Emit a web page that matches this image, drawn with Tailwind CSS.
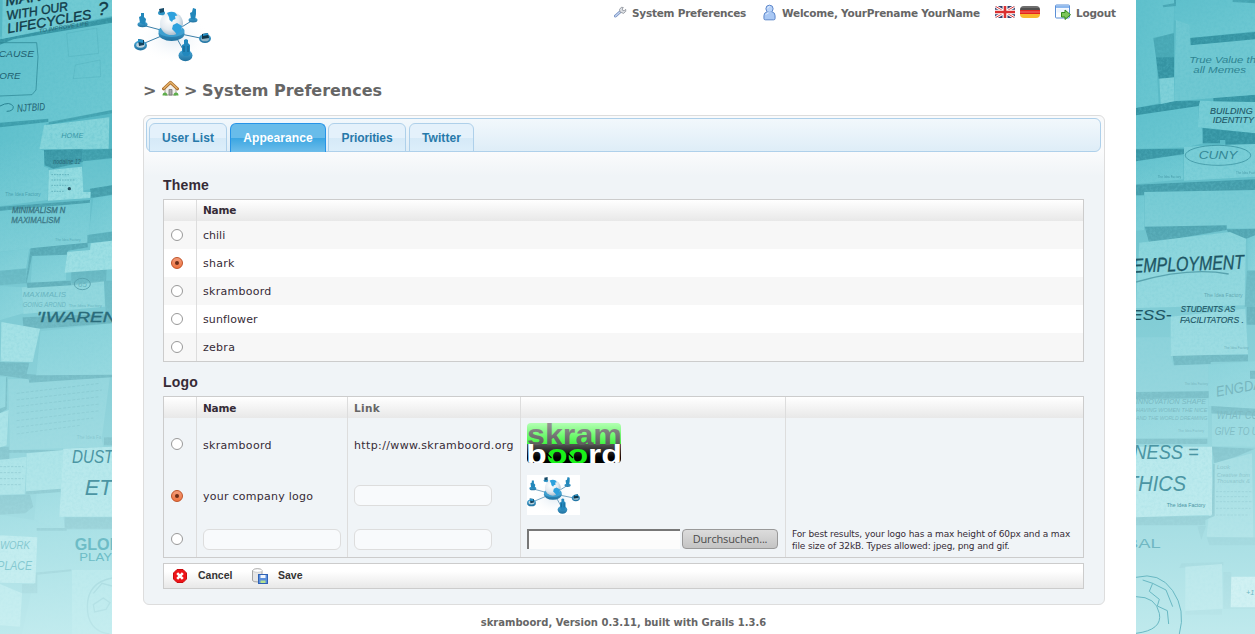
<!DOCTYPE html>
<html lang="en">
<head>
<meta charset="utf-8">
<title>skramboord - System Preferences</title>
<script src="https://cdn.jsdelivr.net/npm/@tailwindcss/browser@4"></script>
</head>
<body class="flex h-[634px] w-[1255px] overflow-hidden bg-white font-['DejaVu_Sans',sans-serif] text-[11px] text-[#362b36]">

<!-- shared symbols -->
<svg class="absolute size-0">
  <defs>
    <radialGradient id="globe" cx=".4" cy=".35" r=".7"><stop offset="0" stop-color="#fff"/><stop offset=".6" stop-color="#e3eaf0"/><stop offset="1" stop-color="#9fb6c8"/></radialGradient>
    <linearGradient id="disc" x1="0" y1="0" x2="0" y2="1"><stop offset="0" stop-color="#49abdb"/><stop offset="1" stop-color="#20719f"/></linearGradient>
    <radialGradient id="halo"><stop offset="0" stop-color="#c8dbea"/><stop offset="1" stop-color="#fff" stop-opacity="0"/></radialGradient>
    <filter id="grain" x="0" y="0" width="1" height="1"><feTurbulence type="fractalNoise" baseFrequency=".12" numOctaves="3" seed="4"/><feColorMatrix values="0 0 0 0 .1  0 0 0 0 .5  0 0 0 0 .58  1.4 0 0 0 -.5"/></filter>
  </defs>
  <symbol id="network" viewBox="0 0 77 55">
    <ellipse cx="40" cy="31" rx="37" ry="24" fill="url(#halo)" opacity=".5"/>
    <path d="M8 17 38 25 59 12M28 5l7 14M6 37l31-13 34 7M41 27l10 18" fill="none" stroke="#3c7fa8" stroke-width="1"/>
    <ellipse cx="37.500" cy="25.500" rx="13" ry="7.500" fill="url(#disc)"/>
    <ellipse cx="37.500" cy="23" rx="13" ry="6" fill="#3fa0d0"/>
    <circle cx="37.500" cy="15.500" r="11.500" fill="url(#globe)"/>
    <path d="M33 5q4-2 8-.5l2.500 3-2.500.5.500 3-2.500 1-1 2-2.500-2-.5-3zM39 17l4-2 5 3-1 5-4 4-2-3-3-3z" fill="#2ea1dd"/>
    <ellipse cx="8.500" cy="16.500" rx="5" ry="2.800" fill="url(#disc)"/>
    <path d="M6 15 5 9l2-1V5h3v4l2 2-1 6z" fill="#2388bb"/>
    <ellipse cx="27.500" cy="5" rx="3.500" ry="2.200" fill="#2e94c6"/><path d="m25 1 5-1v4l-4 1z" fill="#174b68"/>
    <ellipse cx="59" cy="12" rx="4.500" ry="2.500" fill="url(#disc)"/>
    <path d="m57 11-1-6 2-1 1-4 3 1v5l-1 6z" fill="#2388bb"/>
    <ellipse cx="6.500" cy="37.500" rx="6.500" ry="5" fill="url(#disc)"/>
    <ellipse cx="6.500" cy="37" rx="4.300" ry="2.800" fill="#bdd3de"/><path d="m4 31 6 1v5l-5 1z" fill="#12425d"/><path d="m4 31 5 1v3l-5-1z" fill="#2591c8"/>
    <ellipse cx="71" cy="30.500" rx="6" ry="4.500" fill="url(#disc)"/>
    <ellipse cx="71" cy="31" rx="4" ry="2.300" fill="#8fb4c6"/><path d="m68 26 6-1 1 5-7 1z" fill="#0f3548"/><path d="m69 26 5-1v2l-5 1z" fill="#2591c8"/>
    <ellipse cx="51.500" cy="47.500" rx="7" ry="5.800" fill="url(#disc)"/>
    <path d="m48 45 0-8 2-1v-4l2-1 2 1v3l2 2v9l-2 2-4 0z" fill="#2288bd"/><path d="M50 38v6m4-6v6" stroke="#155f89"/>
  </symbol>
</svg>

<!-- left wall of sticky notes -->
<svg class="h-[634px] w-[112px] shrink-0" viewBox="0 0 336 1902" font-family="Liberation Sans" font-style="italic">
  <defs>
    <linearGradient id="fade" x1="0" y1="0" x2="0" y2="1"><stop offset=".22" stop-color="#c4ecef" stop-opacity="0"/><stop offset=".45" stop-color="#c4ecef" stop-opacity=".32"/><stop offset=".75" stop-color="#c4ecef" stop-opacity=".62"/><stop offset="1" stop-color="#cdf0f2" stop-opacity=".88"/></linearGradient>
    <linearGradient id="note" x1="0" y1="0" x2="1" y2="1"><stop offset="0" stop-color="#5fc0cc"/><stop offset="1" stop-color="#6fc9d3"/></linearGradient>
  </defs>
  <rect width="336" height="1902" fill="#56b7c4"/>
  <g fill="url(#note)">
    <path d="M0 110 336 60V330L145 370 0 375z"/>
    <path d="M0 376 140 360 135 400 118 448 132 452V500L145 504 143 600 0 618z"/>
    <path d="M0 634 272 600 268 700 262 728 0 755z"/>
    <path d="M248 484 336 476V556L246 572z" fill="#63c1cc"/>
    <path d="M280 594 336 586V694L266 704z"/>
    <path d="M0 756 88 745 78 804 0 812z"/>
    <path d="M98 766 200 762 198 840 92 852z"/>
    <path d="M64 862 312 842 315 920 70 942z" fill="#79cdd5"/>
    <path d="M0 858 64 862 70 940 0 960z"/>
    <path d="M122 994 336 970V1126L108 1130z"/>
    <path d="M24 1138 330 1130 305 1318 310 1340 30 1350z" fill="#6cc4cf"/>
    <path d="M0 1130 22 1132 18 1220 0 1224z"/>
    <path d="M110 1480 178 1474 196 1590 100 1590z"/>
    <path d="M0 1544 100 1560 196 1590V1650L0 1610z"/>
    <path d="M112 1590H330V1902H66L100 1750z"/>
  </g>
  <g fill="#3593a2">
    <path d="M0 118 336 52V68L40 118 0 134z"/>
    <path d="M146 366 336 330V340L146 374z" opacity=".6"/>
    <path d="M0 368 145 356V366L0 382z" opacity=".8"/>
    <path d="M132 450 248 448V486L160 506 134 496z"/>
    <path d="M248 450 336 446V474L248 484z" opacity=".8"/>
    <path d="M270 566 336 556V584L274 594z"/>
    <path d="M0 620 270 600V608L0 632z"/>
    <path d="M262 705 336 695V722L262 730z" opacity=".7"/>
    <path d="M92 745 262 728 264 742 204 752 200 764 96 768 80 850 76 850z"/>
    <path d="M80 848 212 842 214 856 82 864z"/>
    <path d="M0 812 80 806 76 850 0 856z" opacity=".55"/>
    <path d="M214 812 320 806 318 844 214 856z" opacity=".6"/>
    <path d="M312 842H336V950H318z" opacity=".5"/>
    <path d="M68 952 330 942 336 970 70 990z"/>
    <path d="M120 992 108 1124 80 1122 88 1088 0 1086V1126L86 1138 88 1148 336 1132V1124L108 1126z"/>
    <path d="M22 1132 20 1228 0 1240V1226L16 1220 18 1132z"/>
    <path d="M0 1342 26 1340V1350H190V1358H28V1378H0z"/>
    <path d="M78 1474 182 1464V1476L76 1484z"/>
    <path d="M0 1486 90 1484 100 1520 76 1540 0 1544z"/>
    <path d="M194 1552H336V1586H194zM110 1584H200V1592H110zM100 1718 214 1708V1714L112 1724V1780H66V1752H102z"/>
    <path d="M312 1312H336V1336H312z"/>
  </g>
  <g fill="#90dbe0">
    <path d="M8 0H336V48L6 116z" fill="#71cad3"/>
    <path d="M132 376 328 352 326 446 118 448z" fill="#86d5db"/>
    <path d="M146 510 246 500 250 576 272 576 270 594 144 602z"/>
    <path d="M272 730 336 722V808L194 818 202 756 270 750z"/>
    <path d="M4 966 120 986 98 1086 2 1084z"/>
    <path d="M0 1380 80 1370 74 1482 0 1484z"/><path d="M80 1360 190 1350 184 1466 78 1474z"/>
    <path d="M190 1346 336 1340V1550H178z" fill="#a6e4e8"/>
    <path d="M0 1240 26 1230 20 1336 0 1342z"/>
    <path d="M0 1606 112 1612 106 1750 0 1748z" fill="#b8ecee"/>
    <path d="M0 1752 66 1780 60 1880 0 1876z" fill="#a9e6e9"/>
    <path d="M216 1710H336V1902H216z"/>
  </g>
  <rect width="336" height="1902" filter="url(#grain)" opacity=".5"/>
  <g fill="none" stroke="#2b8493" stroke-width="3">
    <path d="M0 128 110 128 114 170 108 270 96 284 0 288" opacity=".7"/>
    <path d="M200 100 290 84 296 160 206 170zM226 195 300 180 302 230 220 236z" opacity=".15"/>
    <ellipse cx="247" cy="852" rx="24" ry="17"/>
    <path d="M0 318q30-16 40 2 0 14-20 14"/>
    <path d="M154 524H210M154 540H225M154 556H205M154 574H194" stroke-dasharray="5 3" opacity=".5"/>
    <path d="M0 1400H70M0 1418H66M0 1436H70M0 1454H62" stroke-dasharray="7 4" opacity=".6"/>
    <path d="M50 1180 300 1150M50 1200 306 1170M50 1220 300 1190M50 1240 300 1212M50 1262 300 1232M50 1282 280 1254M50 1302 240 1276" stroke-dasharray="9 5" opacity=".35"/>
    <path d="M336 1734q-74 14-74 86t66 82M280 1780l26-30 30 8m-56 56 30-20 20 14-12 20-34 8z" stroke-width="4" stroke="#439eab"/>
  </g>
  <circle cx="208" cy="566" r="5" fill="#153e4d"/>
  <g fill="#123b49" stroke="#123b49" stroke-width="1.200">
    <text transform="translate(18 18) rotate(-9)" font-size="46" textLength="110">MAN</text>
    <text transform="translate(22 60) rotate(-9)" font-size="38" textLength="186">WITH OUR</text>
    <text transform="translate(24 100) rotate(-10)" font-size="40" textLength="256">LIFECYCLES</text>
    <text transform="translate(294 44)" font-size="54">?</text>
  </g>
  <g fill="#205f6f">
    <text x="118" y="98" font-size="16" textLength="150" transform="rotate(-9 118 98)">TO IMPROVE LIFE</text>
    <text x="-4" y="172" font-size="26" textLength="106">CAUSE</text>
    <text x="-2" y="238" font-size="28" textLength="64">ORE</text>
    <text x="52" y="336" font-size="32" textLength="84" transform="rotate(-4 52 336)">NJTBID</text>
    <text x="36" y="638" font-size="25" textLength="160" stroke="#205f6f">MINIMALISM N</text>
    <text x="34" y="668" font-size="29" textLength="146" stroke="#205f6f">MAXIMALISM</text>
    <text x="160" y="492" font-size="20" textLength="82">nodaline 12</text>
  </g>
  <g fill="#3a98a7">
    <text x="184" y="414" font-size="20" textLength="66">HOME</text>
    <text x="16" y="588" font-size="15" font-style="normal" textLength="106">The Idea Factory</text>
    <text x="166" y="722" font-size="13" font-style="normal" textLength="76">The Idea Factory</text>
    <text x="234" y="860" font-size="24">65</text>
    <text x="68" y="892" font-size="22" textLength="130">MAXIMALIS</text>
    <text x="68" y="920" font-size="22" textLength="130">GOING AROND</text>
    <text x="206" y="922" font-size="13" font-style="normal" textLength="100">The Idea Factory</text>
    <text x="230" y="1316" font-size="14" font-style="normal" textLength="74">The Idea Fa</text>
  </g>
  <rect width="336" height="1902" fill="url(#fade)"/>
  <text x="110" y="966" font-size="44" textLength="240" fill="#2a6b7a" stroke="#2a6b7a">'IWAREN</text>
  <g fill="#4f9fad">
    <text x="216" y="1388" font-size="56" textLength="124" fill="#4b95a3">DUST</text>
    <text x="254" y="1486" font-size="64" textLength="84" fill="#4b95a3">ET</text>
    <text x="224" y="1650" font-size="50" font-style="normal" font-weight="bold" textLength="140" fill="#6dbcc6">GLOB</text>
    <text x="238" y="1684" font-size="34" font-style="normal" textLength="98" fill="#6dbcc6">PLAY</text>
    <text x="0" y="1646" font-size="34" textLength="90" fill="#85c9d1">WORK</text>
    <text x="-8" y="1710" font-size="36" textLength="104" fill="#85c9d1">PLACE</text>
  </g>
</svg>

<!-- page -->
<div class="flex h-[634px] w-[1024px] shrink-0 flex-col bg-white pl-[31px] pr-[31px]">
  <header class="flex h-[74px] justify-between">
    <svg class="-ml-[9px] mt-2 h-[55px] w-[77px]"><use href="#network"/></svg>
    <nav class="mr-[-21px] flex h-[27px] items-center pt-px text-[10.5px] font-bold text-[#666]">
      <svg class="mr-[4px] mb-1 size-[14px]" viewBox="0 0 14 14"><path d="M1.500 11 6 7" stroke="#7591c4" stroke-width="3" stroke-linecap="round"/><path d="M1.500 11 6 7" stroke="#c8d6ef" stroke-width="1.200" stroke-linecap="round"/><path d="m6 7-.5-2.500L7.300 2.300l2 .2L8.300 4l.4 1.400 1.500.3 1.500-1.400.1 2-2.200 2.100z" fill="#dcdfe4" stroke="#8a8f98" stroke-width=".8"/></svg>
      <span class="w-[131px] whitespace-nowrap tracking-[-0.24px]">System Preferences</span>
      <svg class="mb-[3px] mr-[6px] h-[17px] w-[13px]" viewBox="0 0 14 17"><path d="M1 15V12Q1 8.500 4 8H10Q13 8.500 13 12V15Q13 16.400 11.500 16.400H2.500Q1 16.400 1 15z" fill="#a9c8f4" stroke="#5480c6"/><circle cx="7" cy="4.500" r="3.900" fill="#b9d3f8" stroke="#5480c6"/><path d="M4.500 8.200h5" stroke="#b0cdf6" stroke-width="1.500"/><path d="M3 11q1-2 3-2M5 4q0-1.500 2-2" stroke="#e8f2ff" fill="none"/></svg>
      <span class="w-[213px] whitespace-nowrap tracking-[-0.22px]">Welcome, YourPrename YourName</span>
      <svg class="mb-[5px] mr-[5px] h-[12px] w-[20px]" viewBox="0 0 20 13" preserveAspectRatio="none"><defs><clipPath id="flag"><rect width="20" height="13" rx="2.500"/></clipPath></defs><g clip-path="url(#flag)"><path fill="#34406f" d="M0 0h20v13H0z"/><path d="m0 0 20 13M20 0 0 13" stroke="#fff" stroke-width="3"/><path d="m0 0 20 13M20 0 0 13" stroke="#d33" stroke-width="1"/><path d="M10 0v13M0 6.500h20" stroke="#fff" stroke-width="5"/><path d="M10 0v13M0 6.500h20" stroke="#d93030" stroke-width="2.600"/></g></svg>
      <svg class="mb-[5px] mr-[15px] h-[12px] w-[20px]" viewBox="0 0 20 12"><defs><clipPath id="pill"><rect width="20" height="12" rx="4"/></clipPath></defs><g clip-path="url(#pill)"><path fill="#505050" d="M0 0h20v4H0z"/><path fill="#e6251c" d="M0 4h20v4H0z"/><path fill="#f9b92d" d="M0 8h20v4H0z"/><path fill="#fff" opacity=".18" d="M0 0h20v2H0zM0 5h20v2H0z"/></g></svg>
      <svg class="mb-[4px] mr-[5px] h-[16px] w-[16px]" viewBox="0 0 16 16"><rect x=".5" y="1" width="14" height="13" rx="1" fill="#fdfeff" stroke="#5b8fd6"/><path d="M1 1.500h13v2.500H1z" fill="#8db8ee"/><path d="M1.500 4.500h12v4h-12z" fill="#eef5fd"/><path d="M6.500 8.500H10V6l5.500 4.700L10 15.500V13H6.500z" fill="#7cc65b" stroke="#2f8a1c"/></svg>
      <span class="w-[50px] tracking-[-0.24px]">Logout</span>
    </nav>
  </header>

  <h1 class="flex h-[32px] items-center pt-px text-[16px] font-bold text-[#666]">
    <span class="w-[19px]">&gt;</span>
    <svg class="mb-[4px] mr-[5px] size-[17px]" viewBox="0 0 17 17"><path d="M3 8.500 8.500 3.500 14 8.500V15H3z" fill="#f2f0ec" stroke="#9c9890" stroke-width=".9"/><path d="M7 9.500h3V15H7z" fill="#aaa8a6" stroke="#777" stroke-width=".8"/><path d="M1.500 8.800 8.500 2.300 15.500 8.800" fill="none" stroke="#a96d2c" stroke-width="3" stroke-linejoin="round" stroke-linecap="round"/><path d="M1.500 8.800 8.500 2.300 15.500 8.800" fill="none" stroke="#e6b269" stroke-width="1.500" stroke-linejoin="round"/><path d="M.5 15.500q0-3 2.500-3 2 0 2.500 3zM11.500 15.500q0-3 2.500-3 2.500 0 2.500 3z" fill="#5dad4a"/></svg>
    <span class="w-[18px]">&gt;</span>
    <span class="tracking-[-0.03px]">System Preferences</span>
  </h1>

  <main class="mt-[9px] h-[490px] w-[962px] rounded-[6px] border border-[#dddddd] bg-[#f0f4f7] bg-[linear-gradient(to_bottom,#f9fafb_0px,#fafbfc_35px,#f0f4f7_60px)] p-[2px]">
    <div class="flex h-[34px] w-[955px] items-end rounded-[6px] border border-[#aed0ea] bg-[linear-gradient(to_bottom,#f2f8fc,#deedf7)] pl-[2px] font-['Liberation_Sans',sans-serif] text-[12px] font-bold tracking-[0.08px] text-[#2779aa]">
      <div class="-mb-px mr-[3px] flex h-[29px] w-[78px] items-center justify-center rounded-t-[6px] border border-[#aed0ea] bg-[linear-gradient(to_bottom,#e4f1fb_50%,#d5e9f7_50%,#dceefa)] pt-px">User List</div>
      <div class="-mb-px mr-[2px] flex h-[29px] w-[96px] items-center justify-center rounded-t-[6px] border border-b-0 border-[#2694e8] bg-[linear-gradient(to_bottom,#68bcea_50%,#3ba6e2_50%,#6dbdea)] text-white">Appearance</div>
      <div class="-mb-px mr-[3px] flex h-[29px] w-[78px] items-center justify-center rounded-t-[6px] border border-[#aed0ea] bg-[linear-gradient(to_bottom,#e4f1fb_50%,#d5e9f7_50%,#dceefa)] pt-px tracking-[-0.1px]">Priorities</div>
      <div class="-mb-px flex h-[29px] w-[65px] items-center justify-center rounded-t-[6px] border border-[#aed0ea] bg-[linear-gradient(to_bottom,#e4f1fb_50%,#d5e9f7_50%,#dceefa)] pt-px">Twitter</div>
    </div>

    <div class="pl-[17px]">
      <h2 class="mt-[22px] h-[25px] font-['Liberation_Sans',sans-serif] text-[14px] font-bold leading-[22px] tracking-[0.18px]">Theme</h2>
      <div class="grid h-[163px] w-[921px] grid-cols-[33px_1fr] grid-rows-[21px_repeat(5,28px)] border border-[#ccc] tracking-[0.28px]">
        <div class="border-r border-[#ddd] bg-linear-to-b from-white to-[#e8e8e8]"></div>
        <div class="bg-linear-to-b from-white to-[#e8e8e8] pl-[6px] text-[10.5px] font-bold leading-[21px] tracking-[-0.2px]">Name</div>
        <div class="flex items-center border-r border-[#ddd] bg-[#f7f7f7] pl-[7px]"><i class="size-[12px] rounded-full border border-[#999] bg-white"></i></div><div class="bg-[#f7f7f7] pl-[6px] leading-[30px] tracking-normal">chili</div>
        <div class="flex items-center border-r border-[#ddd] bg-white pl-[7px]"><i class="flex size-[12px] items-center justify-center rounded-full border border-[#bf5126] bg-linear-to-b from-[#f39b78] to-[#ee7440]"><b class="size-1 rounded-full bg-[#6c2d18]"></b></i></div><div class="bg-white pl-[6px] leading-[30px]">shark</div>
        <div class="flex items-center border-r border-[#ddd] bg-[#f7f7f7] pl-[7px]"><i class="size-[12px] rounded-full border border-[#999] bg-white"></i></div><div class="bg-[#f7f7f7] pl-[6px] leading-[30px]">skramboord</div>
        <div class="flex items-center border-r border-[#ddd] bg-white pl-[7px]"><i class="size-[12px] rounded-full border border-[#999] bg-white"></i></div><div class="bg-white pl-[6px] leading-[30px] tracking-[0.12px]">sunflower</div>
        <div class="flex items-center border-r border-[#ddd] bg-[#f7f7f7] pl-[7px]"><i class="size-[12px] rounded-full border border-[#999] bg-white"></i></div><div class="h-[28px] bg-[#f7f7f7] pl-[6px] leading-[30px]">zebra</div>
      </div>

      <h2 class="mt-[9px] h-[25px] font-['Liberation_Sans',sans-serif] text-[14px] font-bold leading-[22px] tracking-[0.2px]">Logo</h2>
      <div class="grid h-[162px] w-[921px] grid-cols-[33px_151px_173px_265px_1fr] grid-rows-[21px_53px_49px_37px] border border-[#ccc]">
        <div class="border-r border-[#ddd] bg-linear-to-b from-white to-[#e8e8e8]"></div>
        <div class="border-r border-[#ddd] bg-linear-to-b from-white to-[#e8e8e8] pl-[6px] text-[10.5px] font-bold leading-[22px] tracking-[-0.2px]">Name</div>
        <div class="border-r border-[#ddd] bg-linear-to-b from-white to-[#e8e8e8] pl-[6px] text-[10.5px] font-bold leading-[22px] tracking-[0.3px] text-[#666]">Link</div>
        <div class="border-r border-[#ddd] bg-linear-to-b from-white to-[#e8e8e8]"></div>
        <div class="bg-linear-to-b from-white to-[#e8e8e8]"></div>

        <div class="flex items-center border-r border-[#ddd] pb-px pl-[7px]"><i class="size-[12px] rounded-full border border-[#999] bg-white"></i></div>
        <div class="border-r border-[#ddd] pl-[6px] leading-[55px] tracking-[0.3px]">skramboord</div>
        <div class="border-r border-[#ddd] pl-[6px] leading-[55px] tracking-[0.37px]">http://www.skramboord.org</div>
        <div class="border-r border-[#ddd] pl-[6px] pt-[5px]">
          <svg class="h-[40px] w-[94px]" viewBox="0 0 94 40" font-family="Liberation Sans" font-weight="bold">
            <defs>
              <clipPath id="badge"><rect width="94" height="40" rx="4"/></clipPath>
              <clipPath id="upper"><path d="M0 0h94v22H0z"/></clipPath>
              <linearGradient id="green" x1="0" y1="0" x2="0" y2="1"><stop offset="0" stop-color="#b4ffb4"/><stop offset="1" stop-color="#3df63d"/></linearGradient>
              <linearGradient id="black" x1="0" y1="0" x2="0" y2="1"><stop offset="0" stop-color="#555"/><stop offset=".7" stop-color="#000"/></linearGradient>
              <linearGradient id="grey" x1="0" y1="0" x2="0" y2="1"><stop offset="0" stop-color="#a3a3a3"/><stop offset="1" stop-color="#4b4b4b"/></linearGradient>
            </defs>
            <g clip-path="url(#badge)">
              <path fill="url(#green)" d="M0 0h94v22H0z"/><path fill="url(#black)" d="M0 21h94v19H0z"/>
              <g clip-path="url(#upper)"><text x="0" y="22" font-size="30" textLength="95" fill="url(#grey)">skram</text></g>
              <text x="-1" y="41" font-size="28" textLength="96" fill="#fff">b<tspan fill="#19f219">oo</tspan>rd</text>
              <path d="m19.500 30 5 5M41 30l5 5" stroke="#000" stroke-width="1.200"/>
            </g>
          </svg>
        </div>
        <div></div>

        <div class="flex items-center border-r border-[#ddd] pl-[7px]"><i class="flex size-[12px] items-center justify-center rounded-full border border-[#bf5126] bg-linear-to-b from-[#f39b78] to-[#ee7440]"><b class="size-1 rounded-full bg-[#6c2d18]"></b></i></div>
        <div class="border-r border-[#ddd] pl-[6px] leading-[51px] tracking-[0.25px]">your company logo</div>
        <div class="flex items-center border-r border-[#ddd] pl-[6px]"><div class="h-[21px] w-[138px] rounded-[6px] border border-[#ddd] bg-[#f8fafc]"></div></div>
        <div class="flex items-center border-r border-[#ddd] pb-px pl-[6px]"><div class="h-[40px] w-[53px] bg-white"><svg class="mt-[2px] h-[38px] w-[53px]"><use href="#network"/></svg></div></div>
        <div></div>

        <div class="flex items-center border-r border-[#ddd] pl-[7px]"><i class="size-[12px] rounded-full border border-[#999] bg-white"></i></div>
        <div class="flex items-center border-r border-[#ddd] pl-[6px] pt-px"><div class="h-[21px] w-[138px] rounded-[6px] border border-[#ddd] bg-[#f8fafc]"></div></div>
        <div class="flex items-center border-r border-[#ddd] pl-[6px] pt-px"><div class="h-[21px] w-[138px] rounded-[6px] border border-[#ddd] bg-[#f8fafc]"></div></div>
        <div class="flex items-center border-r border-[#ddd] pl-[6px]">
          <div class="mr-[2px] h-[20px] w-[153px] border-l-2 border-t-2 border-[#777] bg-[#fcfcfc]"></div>
          <div class="flex h-[20px] w-[96px] items-center justify-center rounded-[4px] border border-[#999] bg-linear-to-b from-[#dcdcdc] to-[#c4c4c4] pt-px font-['Open_Sans',sans-serif] tracking-[-0.15px] text-[#4c4c4c]">Durchsuchen...</div>
        </div>
        <div class="whitespace-nowrap pl-[6px] pt-[8px] text-[9px] leading-[12px] tracking-[-0.13px]">For best results, your logo has a max height of 60px and a max<br>file size of 32kB. Types allowed: jpeg, png and gif.</div>
      </div>

      <div class="mt-[5px] flex h-[26px] w-[921px] items-center border border-[#ccc] bg-[linear-gradient(to_bottom,#fff_30%,#e8e8e8)] pl-[9px] font-['Liberation_Sans',sans-serif] text-[10.5px] font-bold text-[#333]">
        <svg class="mr-[11px] size-[14px]" viewBox="0 0 14 14"><path d="M4 .500h6L13.500 4v6L10 13.500H4L.500 10V4z" fill="#ee1418" stroke="#c90d10"/><path d="m4.200 4.200 5.600 5.600m0-5.600L4.200 9.800" stroke="#fff" stroke-width="2.600"/></svg>
        <span class="w-[54px]">Cancel</span>
        <svg class="mr-[10px] size-[16px]" viewBox="0 0 16 16"><path d="M.5 2.500v10Q1 14 6 14h4V2.500Q9 .7 5.500 .7T.5 2.500z" fill="#e6e6e6" stroke="#a5a5a5"/><ellipse cx="5.500" cy="2.600" rx="4.600" ry="1.700" fill="#fff" stroke="#bbb" stroke-width=".6"/><rect x="6.500" y="6.500" width="9" height="9" fill="#5b8edb" stroke="#2f62b5"/><path d="M8.500 7h5v3h-5z" fill="#f1f6fd"/><path d="M8.500 12.500h5V15h-5z" fill="#b5e08e"/></svg>
        <span>Save</span>
      </div>
    </div>
  </main>
  <footer class="mt-[11px] pr-px text-center text-[10px] font-bold leading-[13px] text-[#666]">skramboord, Version 0.3.11, built with Grails 1.3.6</footer>
</div>

<!-- right wall of sticky notes -->
<svg class="h-[634px] w-[119px] shrink-0" viewBox="0 0 357 1902" font-family="Liberation Sans" font-style="italic">
  <rect width="357" height="1902" fill="#5bbac6"/>
  <g fill="url(#note)">
    <path d="M0 0H115L112 98 52 116 60 170 68 310 0 324z"/>
    <path d="M115 0H290L357 10V94L162 114V90L115 60z"/>
    <path d="M0 334 188 308 186 352 200 396 202 430 150 442 0 446z"/>
    <path d="M190 302 357 306V400L186 382z" fill="#77cdd6"/>
    <path d="M144 440 357 430V530L144 542z" fill="#77cdd6"/>
    <path d="M0 476 142 466V538L0 552z"/>
    <path d="M26 574 357 566V686L26 680z" fill="#6dc7d1"/>
    <path d="M0 588 24 586V690L0 692z"/>
    <path d="M334 716 357 706V810H336z"/>
    <path d="M0 1012H104V1070L112 1096 218 1092V1172L0 1178z" fill="#68c1cd"/>
    <path d="M218 1094 357 1084V1226L218 1218z"/>
    <path d="M0 1200 216 1196V1312L0 1316z"/>
    <path d="M228 1242 357 1246V1340L228 1338z" fill="#6dc7d1"/>
    <path d="M234 1390 348 1360 352 1614 212 1610z" fill="#80ced6"/>
  </g>
  <g fill="#3593a2">
    <path d="M80 16 114 10V0H120V18L82 22zM290 0H357V10L290 6z" opacity=".6"/>
    <path d="M162 114 357 96V122L162 136z"/>
    <path d="M52 114 114 100V174L60 172z" opacity=".5"/>
    <path d="M60 172H114V234L68 236z"/>
    <path d="M0 324 72 312 120 302H192L188 318 0 346z"/>
    <path d="M232 292 357 284V306L232 304z"/>
    <path d="M200 384 357 400V432L268 434V420H252V430H200z"/>
    <path d="M0 448 144 446V462L0 484z"/>
    <path d="M0 554 357 538V570L24 576V586H0z"/>
    <path d="M26 680 272 676V690L40 730z"/>
    <path d="M272 688 357 686V706L330 716H284z"/>
    <path d="M333 812H357V920H326z" opacity=".6"/>
    <path d="M110 1064H336V1084L224 1086V1092L114 1096z"/>
    <path d="M332 920H357V974H332zM342 1112H357V1136H342z"/>
    <path d="M0 1176 218 1174V1194L0 1198z"/><path d="M226 1218 357 1226V1248L226 1240z"/>
    <path d="M0 1316H214V1332H0zM228 1340 357 1346 300 1370 234 1390z"/>
    <path d="M232 1392H236V1548L208 1560V1576H0V1550L226 1548z"/>
    <path d="M212 1612H357V1636H220zM184 1578H210L196 1620zM136 1690 262 1686V1696L130 1704zM148 1832 258 1828V1844H148zM262 1716H286V1820H357V1826H262z" opacity=".6"/>
  </g>
  <g fill="#80d1d9">
    <path d="M120 60 160 74 164 136 357 118V284L114 304z" fill="#70c8d2"/>
    <path d="M70 236 114 232V304L74 312z"/>
    <path d="M10 728 282 696 330 716 326 916 0 924z" fill="#7bcfd7"/>
    <path d="M104 950 328 926 336 1062 104 1068z"/>
    <path d="M0 1340H228V1544L0 1552z" fill="#ace6ea"/>
    <path d="M148 1700 258 1692 260 1826 148 1832z" fill="#91d5dc"/>
    <path d="M286 1730H357V1822H284z" fill="#ecfcfc"/>
  </g>
  <rect width="357" height="1902" filter="url(#grain)" opacity=".5"/>
  <g fill="none" stroke="#2b8493" stroke-width="3">
    <ellipse cx="246" cy="466" rx="98" ry="30" stroke-width="2"/>
    <path d="M0 846Q160 800 278 822" stroke-width="4"/>
    <path d="M240 1475H350M240 1490H340M240 1505H350M240 1525H344M240 1545H340" stroke-dasharray="7 4" opacity=".5"/>
  </g>
  <g fill="#2f8492">
    <text x="160" y="188" font-size="28" textLength="200">True Value th</text>
    <text x="172" y="218" font-size="27" textLength="158">all Memes</text>
    <text x="188" y="476" font-size="30" textLength="116">CUNY</text>
    <text x="204" y="890" font-size="15" font-style="normal" textLength="116">The Idea Factory</text>
    <text x="264" y="1046" font-size="12" font-style="normal" textLength="74">The Idea Factory</text>
    <text x="146" y="1156" font-size="12" font-style="normal" textLength="70">The Idea Factory</text>
    <text x="126" y="1296" font-size="13" font-style="normal" textLength="78">The Idea Factory</text>
    <text x="300" y="522" font-size="12" font-style="normal" textLength="70" opacity=".7">The Idea Factory</text>
    <text x="65" y="534" font-size="12" font-style="normal" textLength="70" opacity=".7">The Idea Factory</text>
    <text x="0" y="1212" font-size="20" textLength="210">INNOVATION SHAPE</text>
    <text x="0" y="1236" font-size="18" textLength="214">HAVING WOMEN THE NICE</text>
    <text x="0" y="1260" font-size="18" textLength="214">AND THE WORLD DREAMING</text>
    <text x="242" y="1190" font-size="44" textLength="140" transform="rotate(-10 242 1190)">ENGDA</text>
    <text x="242" y="1258" font-size="30" textLength="126">WHAT CO</text>
    <text x="236" y="1304" font-size="32" textLength="130">GIVE TO U</text>
    <text x="242" y="1408" font-size="18" textLength="40">Look</text>
    <text x="242" y="1430" font-size="18" textLength="100">Creative from</text>
    <text x="242" y="1450" font-size="18" textLength="100">Thousands &amp;</text>
  </g>
  <rect width="357" height="1902" fill="url(#fade)"/>
  <g fill="#1d5564" stroke="#1d5564">
    <text x="-10" y="812" font-size="60" textLength="334" transform="rotate(-2 160 790)" stroke-width="1">EMPLOYMENT</text>
    <text x="222" y="342" font-size="25" textLength="128" stroke-width=".3">BUILDING</text>
    <text x="230" y="370" font-size="26" textLength="124" stroke-width=".3">IDENTITY</text>
    <text x="134" y="936" font-size="25" textLength="164" stroke-width=".5">STUDENTS AS</text>
    <text x="132" y="968" font-size="27" textLength="192" stroke-width=".5">FACILITATORS .</text>
    <text x="-14" y="960" font-size="46" textLength="120" stroke-width=".3">ESS-</text>
  </g>
  <g fill="#4b95a3">
    <text x="-8" y="1376" font-size="60" textLength="196">NESS =</text>
    <text x="-30" y="1472" font-size="64" textLength="180">THICS</text>
    <text x="92" y="1520" font-size="16" font-style="normal" textLength="116">The Idea Factory</text>
    <text x="-30" y="1644" font-size="40" font-style="normal" textLength="104" fill="#70b7c2">BAL</text>
    <text x="330" y="1786" font-size="22" fill="#70b7c2">+1</text>
  </g>
  <g fill="none" stroke="#69b8c3" stroke-width="3"><path d="M0 1732q70-18 110 40t20 130M20 1740l30 10-10 24 30 24-6 20 30 14 4 40M50 1750l40 20 20 50M0 1790q60 0 70 50t-70 60"/></g>
</svg>
<script>
  // fit lettering to its line by scaling the glyphs as well as the gaps
  document.querySelectorAll('text[textLength]').forEach(t => t.setAttribute('lengthAdjust', 'spacingAndGlyphs'));
</script>
</body>
</html>
